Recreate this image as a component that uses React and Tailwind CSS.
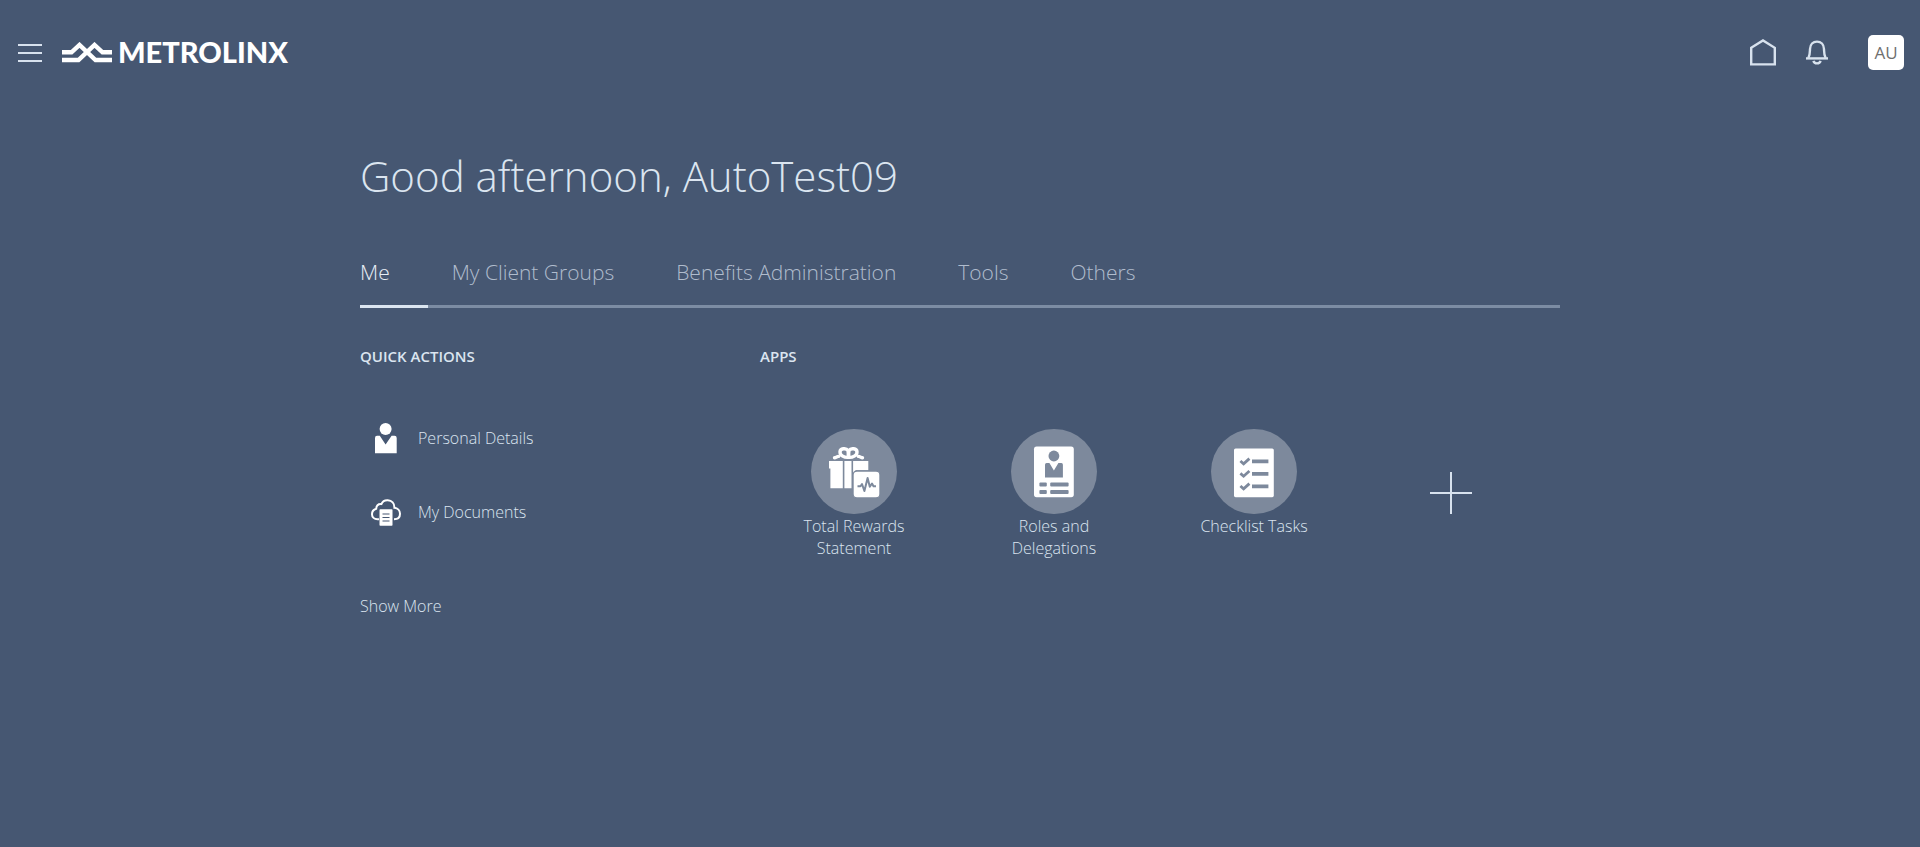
const tabs = ["Me", "My Client Groups", "Benefits Administration", "Tools", "Others"];

function MenuIcon() {
  return (
    <svg width="24" height="20" viewBox="0 0 24 20" fill="#d8e2ee" aria-hidden="true">
      <rect y="1" width="24" height="2" />
      <rect y="9" width="24" height="2" />
      <rect y="17" width="24" height="2" />
    </svg>
  );
}

function LogoMark() {
  return (
    <svg width="50" height="21" viewBox="0 0 50 21" fill="none" stroke="#fff" strokeWidth="4.4" aria-hidden="true">
      <path d="M0 10.3H9.5L17.5 2.9L33.5 18H50" />
      <path d="M50 10.3H40.5L32.5 2.9L16.5 18H0" />
    </svg>
  );
}

function HomeIcon() {
  return (
    <svg width="26" height="27" viewBox="0 0 26 27" fill="none" stroke="#d8e2ee" strokeWidth="2.4" aria-hidden="true">
      <path d="M1.2 8.8L13 1.5L24.8 8.8V25.4H1.2Z" />
    </svg>
  );
}

function BellIcon() {
  return (
    <svg width="22" height="25" viewBox="0 0 22 25" fill="none" stroke="#d8e2ee" strokeWidth="2.4" aria-hidden="true">
      <path d="M0 18.4H22" />
      <path d="M2.4 18C4 15 3.9 12.5 4 9C4.2 4.6 7 1.6 11 1.6C15 1.6 17.8 4.6 18 9C18.1 12.5 18 15 19.6 18" />
      <path d="M7.4 20.8C8.4 24.2 13.6 24.2 14.6 20.8" />
    </svg>
  );
}

function PersonIcon() {
  return (
    <svg width="30" height="32" viewBox="0 0 30 32" fill="#fff" aria-hidden="true">
      <circle cx="14.6" cy="7" r="6" />
      <path d="M6 13.8H8.8L14.6 22.5L20.6 13.8H23.6Q25.7 13.8 25.7 16V31.3H4V16Q4 13.8 6 13.8Z" />
    </svg>
  );
}

function CloudDocIcon() {
  return (
    <svg width="30" height="32" viewBox="0 0 30 32" fill="none" aria-hidden="true">
      <path
        d="M8 23.3H6.5C3.3 23.3 1 21.2 1 18.2C1 15.5 2.8 13.4 5.2 12.7C5.4 9.7 7.4 7.9 10.4 8.1C11.5 5.6 13.9 4.1 16.8 4.3C20.8 4.5 23.5 7.5 23.4 11.8C26.6 12.1 29 14.5 29 17.8C29 21.2 26.6 23.3 23 23.3"
        stroke="#fff"
        strokeWidth="2"
      />
      <rect x="8.5" y="13.3" width="13" height="16.4" rx="0.8" fill="#fff" />
      <path d="M11.5 18H18.5M11.5 21.5H18.5M11.5 25H18.5" stroke="#465772" strokeWidth="1.2" />
    </svg>
  );
}

function RewardsIcon() {
  return (
    <svg width="86" height="85" viewBox="0 0 86 85" aria-hidden="true">
      <g fill="none" stroke="#fff" strokeWidth="3.4" strokeLinecap="round">
        <path d="M37.5 28.3C33.5 28.8 28.8 26.4 29 22.8C29.2 19.4 35 18.6 37 21.5C38.2 23.4 37.8 26 37.5 28.3Z" />
        <path d="M37.5 28.3C41.5 28.8 46.2 26.4 46 22.8C45.8 19.4 40 18.6 38 21.5C36.8 23.4 37.2 26 37.5 28.3Z" />
        <path d="M23.5 28.8C25 28.8 26 27.3 27.6 27.4" />
        <path d="M51.5 28.8C50 28.8 49 27.3 47.4 27.4" />
      </g>
      <path d="M18 32H57.3V41.3H45L42.6 44V59.2H19.4V39.5H18Z" fill="#fff" />
      <path d="M32.6 32V60M41.3 32V60" stroke="#7d899c" strokeWidth="1.6" />
      <rect x="42" y="42" width="27" height="27" rx="4" fill="#fff" stroke="#7d899c" strokeWidth="1.4" />
      <path d="M46.5 57.2H49.5L51 55L53.4 62L56.6 49L58.8 57.8L61 54.5L62.5 57.2H65" fill="none" stroke="#7d899c" strokeWidth="2" strokeLinejoin="round" />
    </svg>
  );
}

function RolesIcon() {
  return (
    <svg width="86" height="85" viewBox="0 0 86 85" aria-hidden="true">
      <rect x="23" y="17.6" width="39.8" height="50.6" rx="2.6" fill="#fff" />
      <g fill="#7d899c">
        <circle cx="42.9" cy="27" r="5.4" />
        <path d="M35.6 34H38.4L42.9 41.4L47.4 34H50.4Q51.9 34 51.9 35.8V48.4H34V35.8Q34 34 35.6 34Z" />
        <rect x="28.4" y="53.6" width="7.4" height="4" rx="1" />
        <rect x="39.2" y="53.6" width="18.4" height="4" rx="1" />
        <rect x="28.4" y="61" width="7.4" height="4" rx="1" />
        <rect x="39.2" y="61" width="18.4" height="4" rx="1" />
      </g>
    </svg>
  );
}

function ChecklistIcon() {
  return (
    <svg width="86" height="85" viewBox="0 0 86 85" aria-hidden="true">
      <rect x="23" y="19.4" width="39.8" height="48.8" rx="1.6" fill="#fff" />
      <g stroke="#7d899c" fill="none">
        <path d="M29.4 32L32.6 34.8L38.4 29.6M29.4 44.4L32.6 47.2L38.4 42M29.4 57L32.6 59.8L38.4 54.6" strokeWidth="2.8" />
        <path d="M41 32.4H57.4M41 44.8H57.4M41 57.4H57.4" strokeWidth="3.8" />
      </g>
    </svg>
  );
}

const actions = [
  { label: "Personal Details", Icon: PersonIcon },
  { label: "My Documents", Icon: CloudDocIcon },
];

const apps = [
  { label: "Total Rewards Statement", Icon: RewardsIcon },
  { label: "Roles and Delegations", Icon: RolesIcon },
  { label: "Checklist Tasks", Icon: ChecklistIcon },
];

export default function App() {
  return (
    <div className="min-h-screen bg-[#465772] font-['Open_Sans',sans-serif] font-light text-[#dbe5f0]">
      <header className="flex h-[105px] items-center justify-between pr-4 pl-[18px]">
        <div className="flex items-center gap-5">
          <button type="button" aria-label="Navigator">
            <MenuIcon />
          </button>
          <a href="#home" className="flex items-center gap-[6px] text-white">
            <LogoMark />
            <span className="pb-[2px] font-['Lato',sans-serif] text-[29px] leading-5 font-black">METROLINX</span>
          </a>
        </div>
        <div className="flex items-center">
          <a href="#home" aria-label="Home" className="mr-[30px]">
            <HomeIcon />
          </a>
          <button type="button" aria-label="Notifications" className="mr-10">
            <BellIcon />
          </button>
          <button
            type="button"
            className="h-[35px] w-9 rounded-[5px] bg-white text-[17px] leading-6 font-normal text-[#6f6f6f]"
          >
            AU
          </button>
        </div>
      </header>

      <main className="mx-auto max-w-[1200px]">
        <h1 className="pt-[41px] text-[42px] leading-[60px]">Good afternoon, AutoTest09</h1>

        <nav className="mt-[39px] flex border-b-[3px] border-[#7c8ca3] text-[21px] leading-8 text-[#b0bccd]">
          {tabs.map((tab, i) => (
            <a
              key={tab}
              href="#tab"
              className={
                i === 0
                  ? "-mb-[3px] border-b-[3px] border-[#dbe5f0] pt-[11px] pr-[38px] pb-[17px] text-[#e6edf5]"
                  : "pt-[11px] pr-[38px] pb-[17px] pl-6"
              }
            >
              {tab}
            </a>
          ))}
        </nav>

        <div className="flex pt-9">
          <section className="w-[400px]">
            <h2 className="text-[15px] leading-6 font-semibold">QUICK ACTIONS</h2>
            <ul className="pt-[33px]">
              {actions.map(({ label, Icon }) => (
                <li key={label} className="h-[74px] pt-2 pl-[11px]">
                  <a href="#action" className="flex h-[58px] items-center gap-[17px] text-base">
                    <Icon />
                    {label}
                  </a>
                </li>
              ))}
            </ul>
            <button type="button" className="mt-[45px] text-base leading-6">
              Show More
            </button>
          </section>

          <section className="flex-1">
            <h2 className="text-[15px] leading-6 font-semibold">APPS</h2>
            <div className="flex gap-3 pt-[61px]">
              {apps.map(({ label, Icon }) => (
                <a key={label} href="#app" className="flex w-[188px] flex-col items-center text-center text-base leading-[22px]">
                  <span className="rounded-full bg-[#7d899c]">
                    <Icon />
                  </span>
                  <span className="w-[120px] pt-px">{label}</span>
                </a>
              ))}
              <button type="button" aria-label="Add app" className="flex w-[182px] justify-center pt-[43px]">
                <svg width="42" height="42" viewBox="0 0 42 42" stroke="#d8e2ee" strokeWidth="2" aria-hidden="true">
                  <path d="M21 0V42M0 21H42" />
                </svg>
              </button>
            </div>
          </section>
        </div>
      </main>
    </div>
  );
}
